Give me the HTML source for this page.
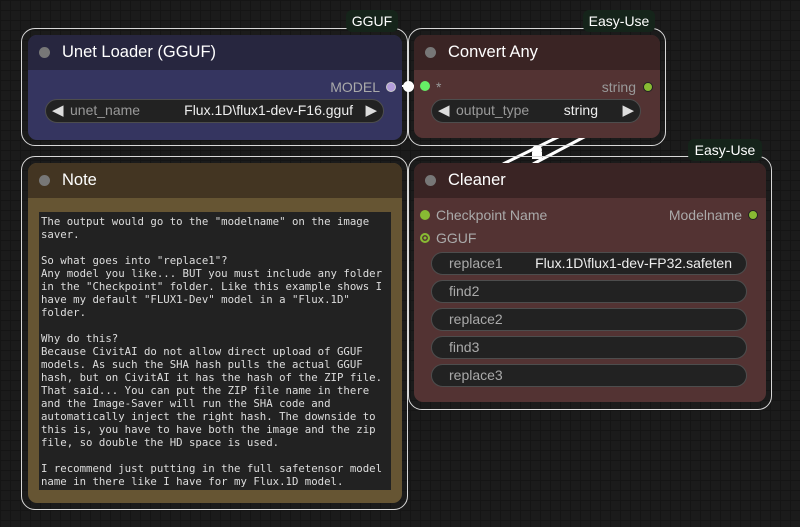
<!DOCTYPE html>
<html><head><style>
*{margin:0;padding:0;box-sizing:border-box}
body{width:800px;height:527px;overflow:hidden;background:#1b1b1b;font-family:"Liberation Sans",sans-serif;position:relative;
background-image:linear-gradient(#151515 1px,transparent 1px),linear-gradient(90deg,#151515 1px,transparent 1px);background-size:10px 10px}
.abs{position:absolute}
.outl{position:absolute;border:1.5px solid #d8d8d8;border-radius:14px}
.node{position:absolute;border-radius:9px;overflow:hidden}
.title{height:35px;color:#fff;font-size:16.5px;line-height:35px;padding-left:34px;position:relative}
.title:before{content:"";position:absolute;left:11px;top:12px;width:11px;height:11px;border-radius:50%;background:#777}
.badge{position:absolute;background:#15241a;color:#fff;font-size:14px;line-height:22px;text-align:center;border-radius:6px}
.lbl{position:absolute;font-size:14px;color:#aaa}
.dot{position:absolute;width:10px;height:10px;border-radius:50%}
.w{position:absolute;height:23px;border:1px solid #4d4d4d;background:#222;border-radius:12px;font-size:14px;color:#aaa;line-height:21px}
.w .v{position:absolute;color:#eee}
.ar{position:absolute;color:#ddd;font-size:15px;top:0}
</style></head><body>
<svg class="abs" style="left:0;top:0" width="800" height="527">
<line x1="391" y1="86" x2="425" y2="86" stroke="#fff" stroke-width="2"/>
<line x1="503" y1="164" x2="560" y2="136" stroke="#fff" stroke-width="3"/>
<line x1="533" y1="164" x2="586" y2="136" stroke="#fff" stroke-width="3"/>
<circle cx="537" cy="150" r="5" fill="#fff"/>
<rect x="532" y="152" width="10" height="7" fill="#fff"/>
</svg>

<!-- Unet -->
<div class="outl" style="left:21px;top:28px;width:387px;height:118px"></div>
<div class="node" style="left:28px;top:35px;width:374px;height:105px;background:#353560">
<div class="title" style="background:#27263f">Unet Loader (GGUF)</div>
<div class="lbl" style="right:22px;top:44px;color:#aaa">MODEL</div>
<div class="dot" style="left:358px;top:47px;background:#b39ddb;border:1px solid #ccc"></div>
<div class="w" style="left:17px;top:64px;width:339px;height:24px"><span class="ar" style="left:6px;line-height:22px">◀</span><span style="position:absolute;left:24px;color:#999">unet_name</span><span class="v" style="right:30px">Flux.1D\flux1-dev-F16.gguf</span><span class="ar" style="right:6px;line-height:22px">▶</span></div>
</div>
<div class="badge" style="left:346px;top:10px;width:52px">GGUF</div>

<!-- Convert Any -->
<div class="outl" style="left:408px;top:28px;width:258px;height:118px"></div>
<div class="node" style="left:414px;top:35px;width:246px;height:103px;background:#533333">
<div class="title" style="background:#3a2424">Convert Any</div>
<div class="dot" style="left:6px;top:46px;background:#66ee66"></div>
<div class="lbl" style="left:22px;top:44px;color:#999">*</div>
<div class="lbl" style="right:24px;top:44px;color:#999">string</div>
<div class="dot" style="left:229px;top:47px;background:#88bb33;border:1px solid #222"></div>
<div class="w" style="left:17px;top:64px;width:210px;height:24px"><span class="ar" style="left:6px;line-height:22px">◀</span><span style="position:absolute;left:24px;color:#999">output_type</span><span class="v" style="right:42px">string</span><span class="ar" style="right:6px;line-height:22px">▶</span></div>
</div>
<div class="badge" style="left:583px;top:10px;width:72px">Easy-Use</div>
<div class="dot" style="left:403px;top:81px;width:11px;height:11px;background:#fff"></div>

<!-- Note -->
<div class="outl" style="left:21px;top:156px;width:387px;height:354px"></div>
<div class="node" style="left:28px;top:163px;width:374px;height:340px;background:#665533">
<div class="title" style="background:#433522">Note</div>
<div style="position:absolute;left:11px;top:49px;width:352px;height:278px;background:#222;color:#ddd;font-family:'DejaVu Sans Mono','Liberation Mono',monospace;font-size:10.7px;line-height:13px;padding:3px 2px;white-space:pre">The output would go to the "modelname" on the image
saver.

So what goes into "replace1"?
Any model you like... BUT you must include any folder
in the "Checkpoint" folder. Like this example shows I
have my default "FLUX1-Dev" model in a "Flux.1D"
folder.

Why do this?
Because CivitAI do not allow direct upload of GGUF
models. As such the SHA hash pulls the actual GGUF
hash, but on CivitAI it has the hash of the ZIP file.
That said... You can put the ZIP file name in there
and the Image-Saver will run the SHA code and
automatically inject the right hash. The downside to
this is, you have to have both the image and the zip
file, so double the HD space is used.

I recommend just putting in the full safetensor model
name in there like I have for my Flux.1D model.</div>
</div>

<!-- Cleaner -->
<div class="outl" style="left:408px;top:156px;width:364px;height:254px"></div>
<div class="node" style="left:414px;top:163px;width:352px;height:239px;background:#533333">
<div class="title" style="background:#3a2424">Cleaner</div>
<div class="dot" style="left:6px;top:47px;background:#88bb33"></div>
<div class="lbl" style="left:22px;top:44px;color:#aaa">Checkpoint Name</div>
<div class="lbl" style="right:24px;top:44px;color:#aaa">Modelname</div>
<div class="dot" style="left:334px;top:47px;background:#88bb33;border:1px solid #222"></div>
<div class="dot" style="left:6px;top:70px;background:#88bb33;border:2px solid #88bb33;box-shadow:inset 0 0 0 1.5px #533333"></div>
<div class="lbl" style="left:22px;top:67px;color:#aaa">GGUF</div>
<div class="w" style="left:17px;top:89px;width:316px"><span style="position:absolute;left:17px">replace1</span><span class="v" style="right:14px">Flux.1D\flux1-dev-FP32.safeten</span></div>
<div class="w" style="left:17px;top:117px;width:316px"><span style="position:absolute;left:17px">find2</span></div>
<div class="w" style="left:17px;top:145px;width:316px"><span style="position:absolute;left:17px">replace2</span></div>
<div class="w" style="left:17px;top:173px;width:316px"><span style="position:absolute;left:17px">find3</span></div>
<div class="w" style="left:17px;top:201px;width:316px"><span style="position:absolute;left:17px">replace3</span></div>
</div>
<div class="badge" style="left:688px;top:139px;width:74px">Easy-Use</div>
</body></html>
